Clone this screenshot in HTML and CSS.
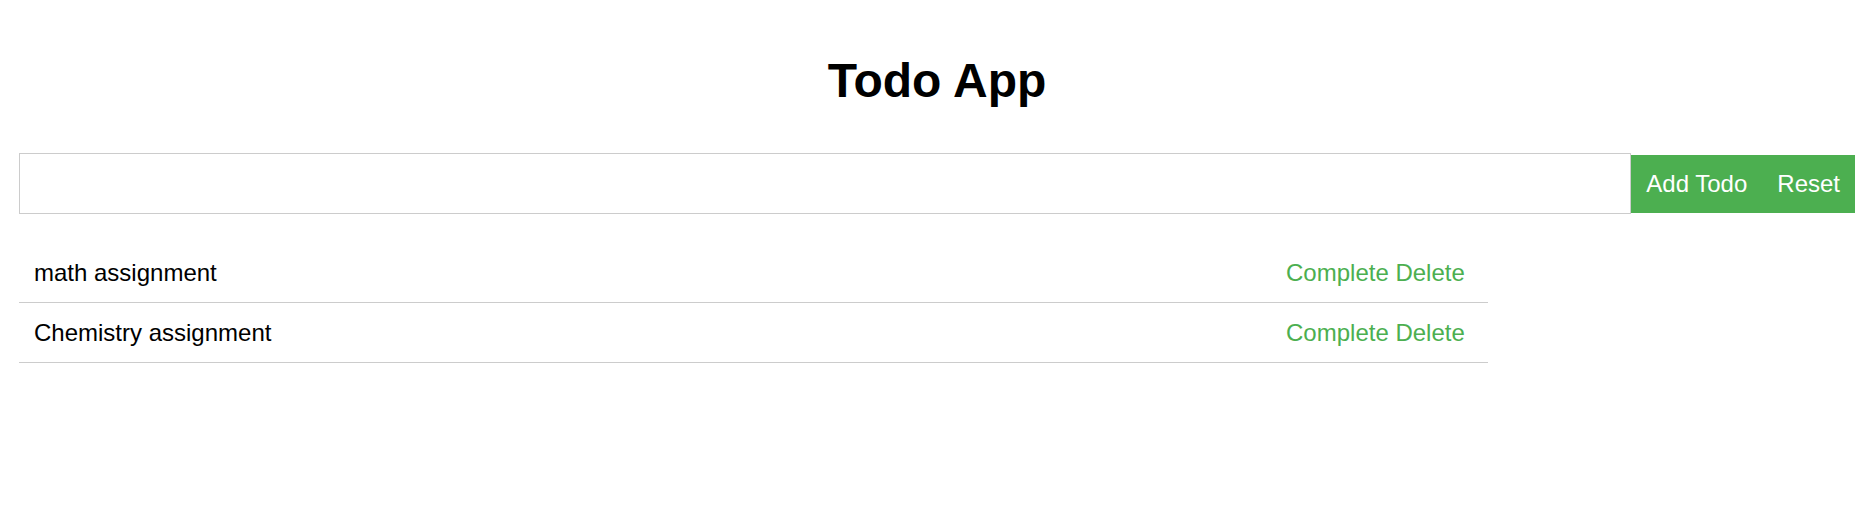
FILE: index.html
```html
<!DOCTYPE html>
<html lang="en">
<head>
<meta charset="utf-8">
<title>Todo App</title>
<link rel="stylesheet" href="styles.css">
</head>
<body>
<div class="app">
  <h1 class="title">Todo App</h1>
  <form class="todo-form">
    <input class="todo-input" type="text">
    <button class="btn" type="button">Add Todo</button>
    <button class="btn" type="button">Reset</button>
  </form>
  <ul class="todo-list">
    <li class="todo-item">
      <span class="todo-text">math assignment</span>
      <span class="todo-actions"><button class="link-btn" type="button">Complete</button> <button class="link-btn" type="button">Delete</button></span>
    </li>
    <li class="todo-item">
      <span class="todo-text">Chemistry assignment</span>
      <span class="todo-actions"><button class="link-btn" type="button">Complete</button> <button class="link-btn" type="button">Delete</button></span>
    </li>
  </ul>
</div>
</body>
</html>
```
FILE: styles.css
```css
* {
  box-sizing: border-box;
}

html, body {
  margin: 0;
  background: #ffffff;
}

body {
  font-family: "Liberation Sans", Arial, sans-serif;
  color: #000000;
}

.app {
  padding: 53px 20px 0 19px;
}

.title {
  margin: 0 0 45px;
  font-size: 48px;
  font-weight: bold;
  text-align: center;
  line-height: normal;
}

.todo-form {
  display: flex;
  align-items: center;
  margin: 0;
}

.todo-input {
  flex: 1;
  height: 61px;
  margin: 0;
  border: 1px solid #cccccc;
  padding: 0 15px;
  font-family: inherit;
  font-size: 24px;
  outline: none;
}

.btn {
  height: 58px;
  margin: 0;
  padding: 0 15px;
  border: none;
  border-radius: 0;
  background: #4caf50;
  color: #ffffff;
  font-family: inherit;
  font-size: 24px;
  line-height: normal;
}

.todo-list {
  list-style: none;
  width: 80%;
  margin: 29px 0 0;
  padding: 0;
}

.todo-item {
  display: flex;
  justify-content: space-between;
  align-items: center;
  padding: 16px 23px 16px 15px;
  border-bottom: 1px solid #cccccc;
  font-size: 24px;
  line-height: 27px;
}

.todo-actions {
  white-space: nowrap;
}

.link-btn {
  margin: 0;
  padding: 0;
  border: none;
  background: none;
  color: #4caf50;
  font-family: inherit;
  font-size: 24px;
  line-height: 27px;
  cursor: pointer;
}
```
